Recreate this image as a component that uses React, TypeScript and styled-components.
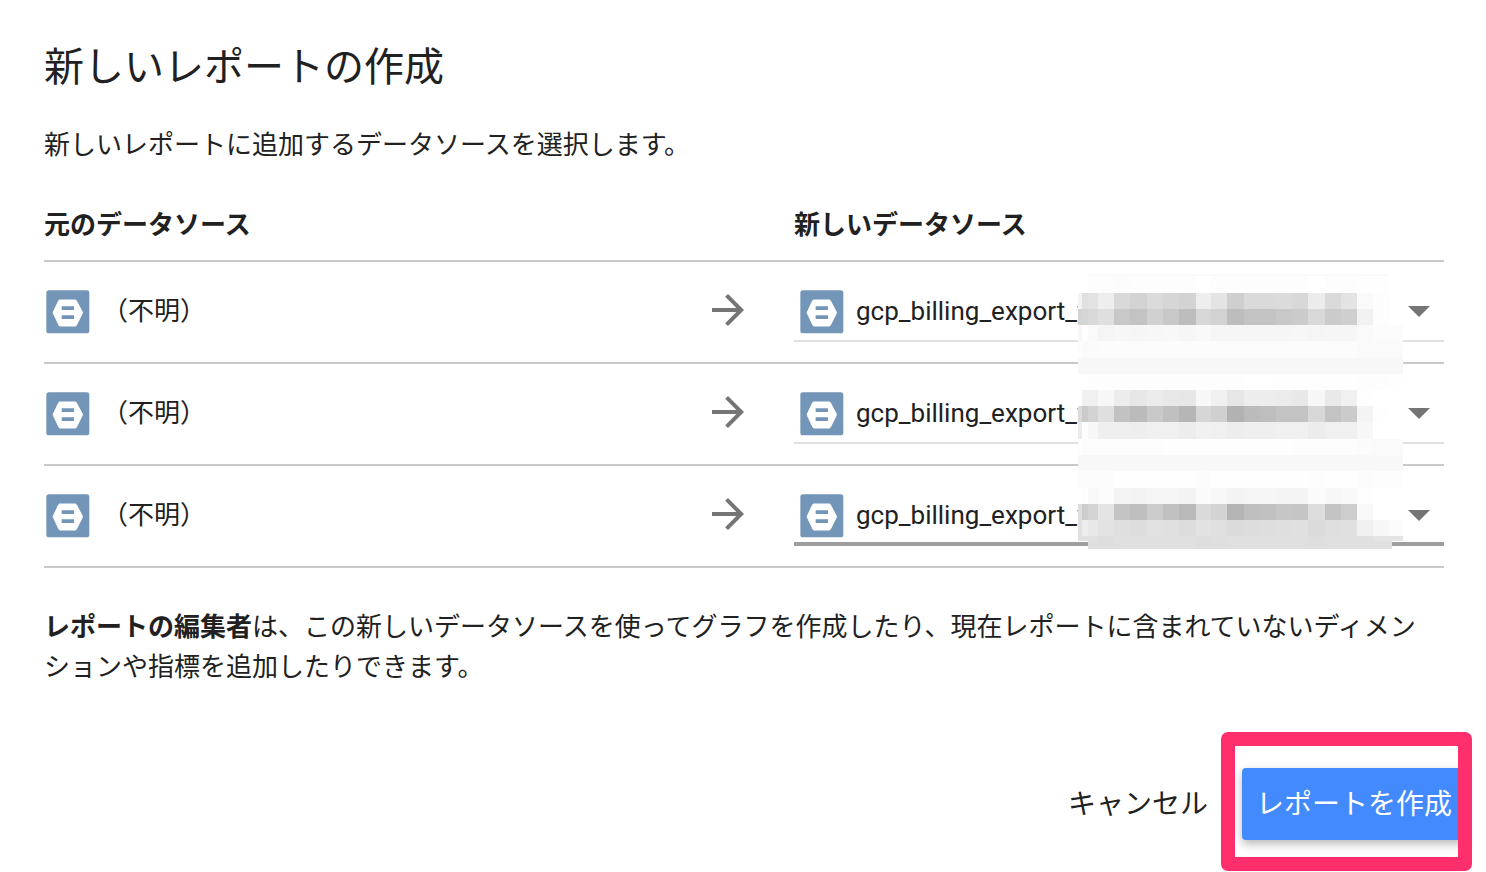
import React from 'react';
import styled, { createGlobalStyle } from 'styled-components';

const GlobalStyle = createGlobalStyle`
  *, *::before, *::after { box-sizing: border-box; }
  body {
    margin: 0;
    background: #fff;
    color: #212121;
    font-family: Roboto, "Noto Sans CJK JP", sans-serif;
    font-size: 26px;
    line-height: 40px;
  }
`;

const Dialog = styled.main`
  padding: 38px 42px 32px 44px;
`;

const Title = styled.h1`
  margin: 0;
  font-size: 40px;
  font-weight: 400;
  line-height: 60px;
`;

const Lead = styled.p`
  margin: 27px 0 40px;
`;

const TableArea = styled.div`
  position: relative;
`;

const Table = styled.table`
  width: 100%;
  table-layout: fixed;
  border-collapse: separate;
  border-spacing: 0;
`;

const HeadCell = styled.th<{ $width?: string }>`
  width: ${(p) => p.$width ?? 'auto'};
  height: 57px;
  padding: 0 0 15px;
  border-bottom: 2px solid #c9c9c9;
  text-align: left;
  font-weight: 700;
`;

const Cell = styled.td`
  padding: 20px 0;
  border-bottom: 2px solid #c9c9c9;
  vertical-align: top;
`;

const Source = styled.div`
  display: flex;
  gap: 12px;
  height: 60px;
  padding: 8px 0 0 2px;
`;

const SourceName = styled.span`
  line-height: 42px;
`;

const ArrowBox = styled.div`
  display: flex;
  height: 60px;
  padding-top: 4px;
`;

const Picker = styled.label<{ $active?: boolean }>`
  display: flex;
  gap: 12px;
  height: 60px;
  padding: 8px 14px 0 6px;
  border-bottom: ${(p) => (p.$active ? '4px solid #9e9e9e' : '2px solid #e0e0e0')};
`;

const Select = styled.select`
  flex: 1;
  min-width: 0;
  height: 42px;
  padding: 0;
  border: 0;
  outline: 0;
  appearance: none;
  background: transparent;
  color: inherit;
  font: inherit;
`;

const Caret = styled.svg`
  flex: none;
  margin-top: 16px;
`;

const Redaction = styled.svg`
  position: absolute;
  top: 69px;
  right: 41px;
  pointer-events: none;
`;

const Note = styled.p`
  margin: 39px 0 0;
  padding-right: 12px;
`;

const Actions = styled.div`
  display: flex;
  justify-content: flex-end;
  gap: 20px;
  margin: 81px -22px 0 0;
`;

const Button = styled.button<{ $primary?: boolean }>`
  height: 72px;
  padding: 2px 14px 0;
  border: 0;
  border-radius: 4px;
  background: ${(p) => (p.$primary ? '#448aff' : 'transparent')};
  box-shadow: ${(p) => (p.$primary ? '0 4px 10px rgba(0, 0, 0, 0.28)' : 'none')};
  color: ${(p) => (p.$primary ? '#fff' : 'inherit')};
  font-family: inherit;
  font-size: 28px;
  line-height: 40px;
`;

const Highlighted = styled.div`
  position: relative;

  &::after {
    content: '';
    position: absolute;
    inset: -36px -6px -31px -21px;
    border: 14px solid #ff2f6d;
    border-radius: 7px;
    pointer-events: none;
  }
`;

const Icon = styled.svg`
  flex: none;
`;

const BigQueryIcon = () => (
  <Icon width="44" height="44" viewBox="0 0 132 132" aria-hidden="true">
    <rect x="1" y="1" width="129" height="129" rx="8" fill="#7395b7" />
    <path d="M40 30H88Q90 30 91 32L109 66Q110 68 109 70L91 106Q90 108 88 108H42Q40 108 39 106L22 70Q21 68 22 66L38 32Q39 30 40 30Z" fill="#fff" stroke="#fff" strokeWidth="3" />
    <path d="M47 49H84V60H47ZM47 76H84V87H47Z" fill="#7395b7" />
  </Icon>
);

const ArrowIcon = () => (
  <Icon width="48" height="48" viewBox="0 0 24 24" fill="#757575" aria-hidden="true">
    <path d="M12 4l-1.41 1.41L16.17 11H4v2h12.17l-5.58 5.59L12 20l8-8z" />
  </Icon>
);

const columnEdges = [
  0, 4, 10, 20, 36, 52, 69, 85, 101, 118, 133, 149, 166, 182, 198, 214, 230, 247, 263, 279, 295, 311, 325,
];

// Each band: top, bottom, then one grey level per column.
const bands: [number, number, number[]][] = [
  [0, 2, [255, 255, 250, 250, 250, 250, 250, 250, 250, 250, 250, 250, 250, 250, 250, 250, 250, 250, 250, 250, 250, 255]],
  [2, 19, [255, 255, 253, 253, 252, 253, 253, 253, 253, 255, 253, 253, 253, 253, 253, 253, 255, 253, 253, 254, 254, 255]],
  [19, 35, [243, 224, 227, 238, 217, 211, 219, 214, 211, 238, 228, 207, 218, 218, 219, 216, 236, 218, 227, 250, 253, 255]],
  [35, 51, [211, 213, 217, 223, 200, 195, 209, 200, 189, 215, 210, 189, 195, 195, 200, 203, 217, 203, 207, 242, 253, 255]],
  [51, 67, [247, 255, 250, 245, 247, 246, 247, 248, 246, 249, 246, 246, 246, 246, 246, 247, 245, 246, 246, 250, 252, 252]],
  [67, 84, [252, 250, 251, 252, 252, 252, 252, 252, 252, 252, 252, 252, 252, 252, 252, 252, 252, 252, 252, 250, 250, 250]],
  [84, 100, Array(22).fill(247)],
  [100, 116, [255, 255, 253, 253, 253, 253, 253, 253, 253, 253, 253, 253, 255, 255, 254, 254, 254, 254, 254, 253, 253, 254]],
  [116, 132, [255, 240, 240, 247, 236, 231, 235, 232, 231, 247, 240, 230, 237, 237, 235, 232, 247, 233, 240, 254, 255, 255]],
  [132, 148, [218, 202, 211, 223, 194, 187, 201, 192, 182, 214, 208, 178, 187, 190, 195, 195, 216, 195, 203, 244, 254, 255]],
  [148, 165, [235, 253, 247, 239, 239, 238, 240, 240, 237, 241, 240, 237, 239, 239, 240, 240, 236, 240, 240, 247, 255, 255]],
  [165, 181, [254, 252, 253, 253, 253, 253, 253, 254, 254, 254, 254, 254, 254, 254, 254, 253, 253, 253, 253, 251, 250, 250]],
  [181, 197, Array(22).fill(248)],
  [197, 214, [252, 252, 252, 252, 254, 254, 254, 254, 254, 252, 254, 254, 254, 254, 254, 254, 253, 254, 254, 252, 253, 253]],
  [214, 230, [255, 253, 249, 252, 244, 243, 245, 245, 243, 251, 248, 243, 245, 245, 244, 244, 251, 247, 249, 254, 255, 255]],
  [230, 246, [222, 204, 212, 228, 196, 190, 204, 193, 185, 218, 211, 180, 190, 193, 198, 197, 221, 196, 205, 249, 255, 255]],
  [246, 262, [224, 237, 232, 227, 223, 221, 225, 224, 221, 226, 224, 219, 221, 222, 223, 224, 219, 223, 224, 240, 247, 252]],
  [262, 267, [224, 224, 224, 222, 224, 224, 224, 224, 224, 222, 223, 224, 224, 224, 224, 224, 222, 224, 224, 224, 228, 228]],
  [267, 275, [-1, -1, 223, 222, 224, 224, 224, 224, 224, 222, 223, 224, 224, 224, 224, 224, 223, 224, 224, 224, 224, -1]],
];

const Mosaic = () => (
  <Redaction width="325" height="275" viewBox="0 0 325 275" shapeRendering="crispEdges" aria-hidden="true">
    {bands.map(([top, bottom, levels]) =>
      levels.map((level, i) => {
        if (level < 0) return null;
        const left = columnEdges[i];
        const right = i === 20 && top === 267 ? 314 : columnEdges[i + 1];
        return (
          <rect
            key={`${top}-${i}`}
            x={left}
            y={top}
            width={right - left}
            height={bottom - top}
            fill={`rgb(${level}, ${level}, ${level})`}
          />
        );
      }),
    )}
  </Redaction>
);

const rows = [{ id: 'source-1' }, { id: 'source-2' }, { id: 'source-3', active: true }];

export default function App() {
  return (
    <>
      <GlobalStyle />
      <Dialog lang="ja">
        <Title>新しいレポートの作成</Title>
        <Lead>新しいレポートに追加するデータソースを選択します。</Lead>
        <TableArea>
          <Table>
            <thead>
              <tr>
                <HeadCell scope="col">元のデータソース</HeadCell>
                <HeadCell $width="90px" />
                <HeadCell scope="col" $width="650px">新しいデータソース</HeadCell>
              </tr>
            </thead>
            <tbody>
              {rows.map((row) => (
                <tr key={row.id}>
                  <Cell>
                    <Source>
                      <BigQueryIcon />
                      <SourceName>（不明）</SourceName>
                    </Source>
                  </Cell>
                  <Cell>
                    <ArrowBox>
                      <ArrowIcon />
                    </ArrowBox>
                  </Cell>
                  <Cell>
                    <Picker htmlFor={row.id} $active={row.active}>
                      <BigQueryIcon />
                      <Select id={row.id} aria-label="新しいデータソース">
                        <option>gcp_billing_export_v</option>
                      </Select>
                      <Caret width="22" height="11" viewBox="0 0 22 11" aria-hidden="true">
                        <path d="M0 0H22L11 11Z" fill="#757575" />
                      </Caret>
                    </Picker>
                  </Cell>
                </tr>
              ))}
            </tbody>
          </Table>
          <Mosaic />
        </TableArea>
        <Note>
          <strong>レポートの編集者</strong>
          は、この新しいデータソースを使ってグラフを作成したり、現在レポートに含まれていないディメンションや指標を追加したりできます。
        </Note>
        <Actions>
          <Button type="button">キャンセル</Button>
          <Highlighted>
            <Button type="button" $primary>レポートを作成</Button>
          </Highlighted>
        </Actions>
      </Dialog>
    </>
  );
}
